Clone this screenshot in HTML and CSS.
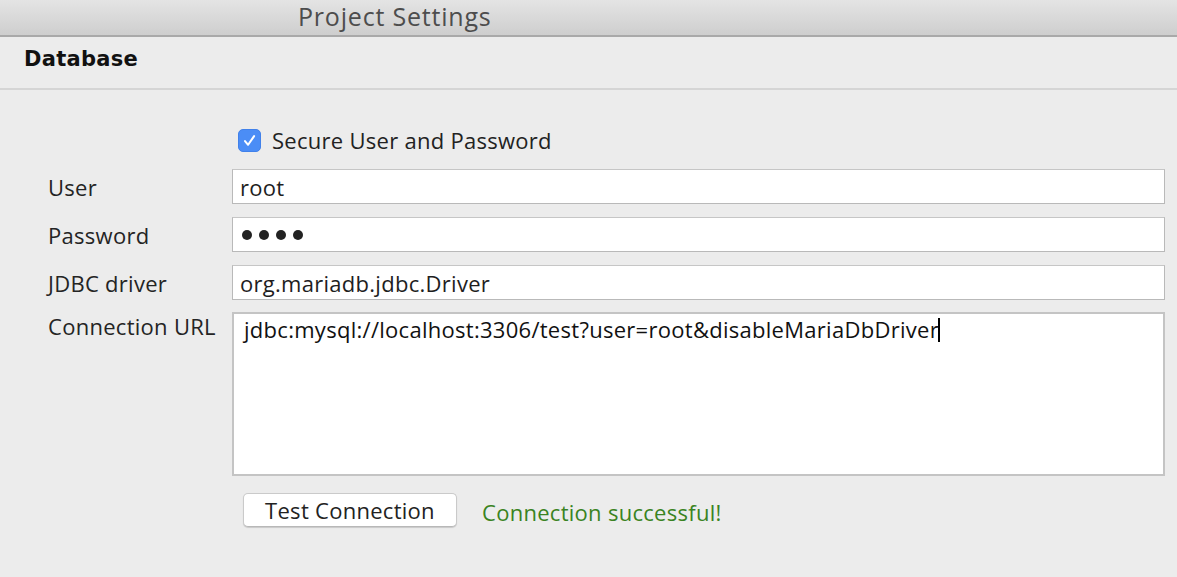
FILE: index.html
```html
<!DOCTYPE html>
<html>
<head>
<meta charset="utf-8">
<link rel="stylesheet" href="styles.css">
</head>
<body>
<div class="window">
  <div class="titlebar"><span class="title">Project Settings</span></div>
  <div class="section-head">Database</div>
  <div class="content">
    <div class="check-row">
      <span class="checkbox"><svg width="15" height="15" viewBox="0 0 14 14"><path d="M2.8 7.6 L5.7 11 L11.3 2.9" fill="none" stroke="#fff" stroke-width="1.9" stroke-linecap="round" stroke-linejoin="round"/></svg></span>
      <span class="check-label">Secure User and Password</span>
    </div>
    <div class="form">
      <label class="lbl">User</label>
      <div class="field">root</div>
      <label class="lbl">Password</label>
      <div class="field pw"><span class="dot"></span><span class="dot"></span><span class="dot"></span><span class="dot"></span></div>
      <label class="lbl">JDBC driver</label>
      <div class="field">org.mariadb.jdbc.Driver</div>
      <label class="lbl lbl-top">Connection URL</label>
      <div class="area"><span>jdbc:mysql://localhost:3306/test?user=root&amp;disableMariaDbDriver</span><span class="caret"></span></div>
    </div>
    <div class="actions">
      <button class="btn">Test Connection</button>
      <span class="ok">Connection successful!</span>
    </div>
    <div class="next-head">Connection Pool Settings</div>
  </div>
</div>
</body>
</html>
```
FILE: styles.css
```css
html, body {
  margin: 0;
  padding: 0;
  background: #ececec;
  overflow: hidden;
}
body {
  font-family: "Open Sans", "Liberation Sans", sans-serif;
  color: #222;
  width: 1177px;
  height: 577px;
}
.window {
  display: flex;
  flex-direction: column;
  height: 577px;
  overflow: hidden;
}
.titlebar {
  height: 35px;
  background: linear-gradient(#e4e4e4, #cecece);
  border-bottom: 2px solid #a9a9a9;
  display: flex;
  align-items: center;
  padding-left: 298px;
  flex-shrink: 0;
}
.title {
  font-size: 25px;
  letter-spacing: 0.8px;
  color: #4d4d4d;
  line-height: 35px;
  margin-top: -2px;
}
.section-head {
  height: 51px;
  border-bottom: 2px solid #d5d5d5;
  padding-left: 24px;
  font-family: "DejaVu Sans", "Open Sans", sans-serif;
  font-weight: bold;
  font-size: 21px;
  letter-spacing: 0.3px;
  color: #111;
  line-height: 44px;
  flex-shrink: 0;
}
.content {
  padding: 0 12px 0 48px;
  flex: 1;
  font-size: 22px;
  letter-spacing: 0.28px;
}
.check-row {
  display: flex;
  align-items: center;
  margin-top: 38px;
  margin-left: 190px;
  height: 24px;
}
.checkbox {
  width: 23px;
  height: 23px;
  box-sizing: border-box;
  border-radius: 5px;
  background: #4b8df6;
  border: 1px solid #4181ea;
  display: flex;
  align-items: center;
  justify-content: center;
}
.check-label {
  margin-left: 11px;
  color: #222;
}
.form {
  display: grid;
  grid-template-columns: 184px 933px;
  row-gap: 13px;
  margin-top: 17px;
}
.lbl {
  color: #242424;
  display: flex;
  align-items: center;
  height: 35px;
}
.lbl-top {
  align-items: flex-start;
  height: auto;
  margin-top: -2px;
}
.field {
  height: 35px;
  box-sizing: border-box;
  background: #fff;
  border: 1px solid #b9b9b9;
  border-top-color: #c6c6c6;
  padding-left: 7px;
  display: flex;
  align-items: center;
  color: #1e1e1e;
}
.pw {
  gap: 7px;
  padding-left: 9px;
}
.dot {
  width: 10px;
  height: 10px;
  border-radius: 50%;
  background: #222;
}
.area {
  height: 164px;
  margin-top: -1px;
  box-sizing: border-box;
  background: #fff;
  border: 2px solid #c4c4c4;
  padding: 0 0 0 10px;
  display: flex;
  align-items: flex-start;
  color: #111;
}
.caret {
  display: inline-block;
  width: 2px;
  height: 24px;
  background: #000;
  margin-top: 4px;
  margin-left: -1px;
}
.actions {
  display: flex;
  align-items: center;
  margin-left: 195px;
  margin-top: 17px;
  gap: 25px;
}
.btn {
  width: 214px;
  height: 34px;
  background: #fff;
  border: 1px solid #cacaca;
  border-bottom-color: #b8b8b8;
  border-radius: 5px;
  box-shadow: 0 1px 1px rgba(0,0,0,0.15);
  font-family: "Open Sans", "Liberation Sans", sans-serif;
  font-size: 22px;
  letter-spacing: 0.28px;
  line-height: 30px;
  color: #222;
  padding: 0;
}
.ok {
  color: #3a8322;
  margin-top: 4px;
}
.next-head {
  margin-top: 47px;
  margin-left: -6px;
  font-family: "DejaVu Sans", "Open Sans", sans-serif;
  font-weight: bold;
  font-size: 21px;
  color: #111;
}
```
